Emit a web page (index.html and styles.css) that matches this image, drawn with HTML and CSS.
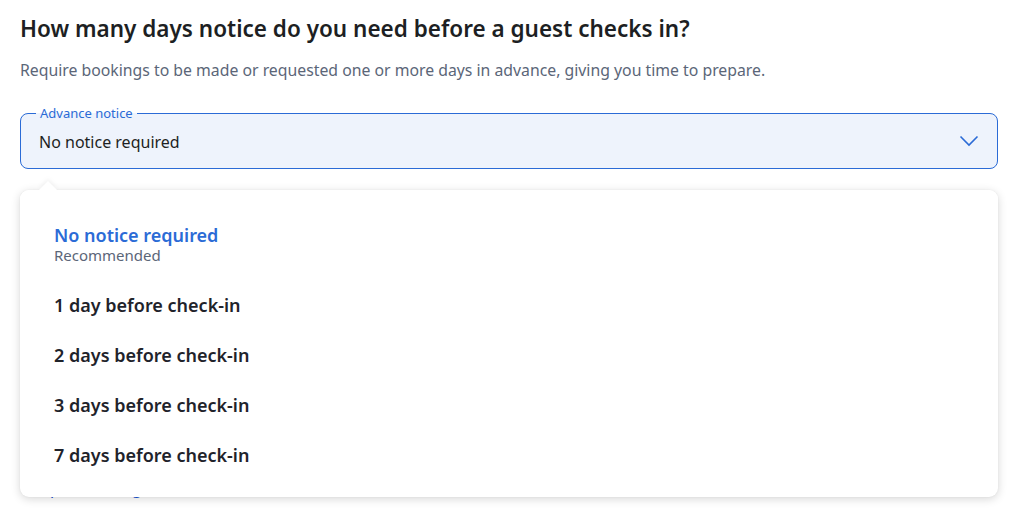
FILE: index.html
```html
<!DOCTYPE html>
<html>
<head>
<meta charset="utf-8">
<link rel="stylesheet" href="styles.css">
</head>
<body>
<div class="page">
  <h1 class="title">How many days notice do you need before a guest checks in?</h1>
  <p class="subtitle">Require bookings to be made or requested one or more days in advance, giving you time to prepare.</p>
  <div class="field-wrap">
    <fieldset class="field">
      <legend class="legend">Advance notice</legend>
      <div class="value">No notice required</div>
      <svg class="chev" width="20" height="12" viewBox="0 0 20 12"><path d="M1.5 1.5 L10 10 L18.5 1.5" fill="none" stroke="#2b6bd6" stroke-width="1.6"/></svg>
    </fieldset>
    <div class="below"><span class="link">pre-booking rules</span></div>
    <div class="menu">
      <div class="caret"></div>
      <ul class="options">
        <li class="opt selected"><span class="opt-main">No notice required</span><span class="opt-sub">Recommended</span></li>
        <li class="opt"><span class="opt-main">1 day before check-in</span></li>
        <li class="opt"><span class="opt-main">2 days before check-in</span></li>
        <li class="opt"><span class="opt-main">3 days before check-in</span></li>
        <li class="opt"><span class="opt-main">7 days before check-in</span></li>
      </ul>
    </div>
  </div>
</div>
</body>
</html>
```

FILE: styles.css
```css
html, body {
  margin: 0;
  padding: 0;
  background: #ffffff;
}
body {
  font-family: "Noto Sans", "Open Sans", sans-serif;
  color: #1f2328;
}
.page {
  padding: 14px 29px 0 20px;
}
.title {
  margin: 0;
  font-size: 22.5px;
  font-weight: 600;
  line-height: 30px;
  color: #1d1f23;
}
.subtitle {
  margin: 14px 0 0 0;
  font-size: 15.8px;
  line-height: 24px;
  color: #5b6678;
}
.field-wrap {
  position: relative;
  margin-top: 31px;
}
.field {
  margin: 0;
  padding: 0 18px 0 18px;
  height: 56px;
  box-sizing: border-box;
  border: 1px solid #2b6bd6;
  border-radius: 8px;
  background: #eef3fc;
  display: flex;
  align-items: center;
  justify-content: space-between;
  position: relative;
}
.legend {
  font-size: 13px;
  line-height: 14px;
  color: #2b6bd6;
  padding: 0 4px;
  position: absolute;
  top: -8px;
  left: 15px;
  background: linear-gradient(#fff 0 50%, #eef3fc 50% 100%);
}
.value {
  font-size: 16px;
  line-height: 22px;
  color: #1d1f23;
  margin-top: 2px;
}
.chev {
  display: block;
}
.below {
  padding: 18px 0 0 30px;
  height: 340px;
}
.link {
  color: #1a56d6;
  font-size: 16px;
  position: relative;
  top: 290px;
}
.menu {
  position: absolute;
  left: 0;
  right: 0;
  top: 77px;
  height: 307px;
  background: #ffffff;
  border-radius: 9px;
  box-shadow: 0 2px 10px rgba(0, 0, 0, 0.16), 0 0 2px rgba(0,0,0,0.06);
}
.caret {
  position: absolute;
  left: 19px;
  top: -9px;
  width: 0;
  height: 0;
  border-left: 9px solid transparent;
  border-right: 9px solid transparent;
  border-bottom: 9px solid #ffffff;
  filter: drop-shadow(0 -2px 2px rgba(0,0,0,0.06));
}
.options {
  list-style: none;
  margin: 0;
  padding: 34px 0 0 34px;
  position: relative;
  background: #fff;
  border-radius: 9px;
}
.opt {
  display: flex;
  flex-direction: column;
  margin-bottom: 22px;
}
.opt.selected {
  margin-bottom: 28px;
}
.opt-main {
  font-size: 18px;
  font-weight: 600;
  line-height: 28px;
  color: #1f232b;
}
.selected .opt-main {
  color: #2b6bd6;
  line-height: 23px;
}
.opt-sub {
  font-size: 15px;
  line-height: 16px;
  color: #5b6678;
}
```
